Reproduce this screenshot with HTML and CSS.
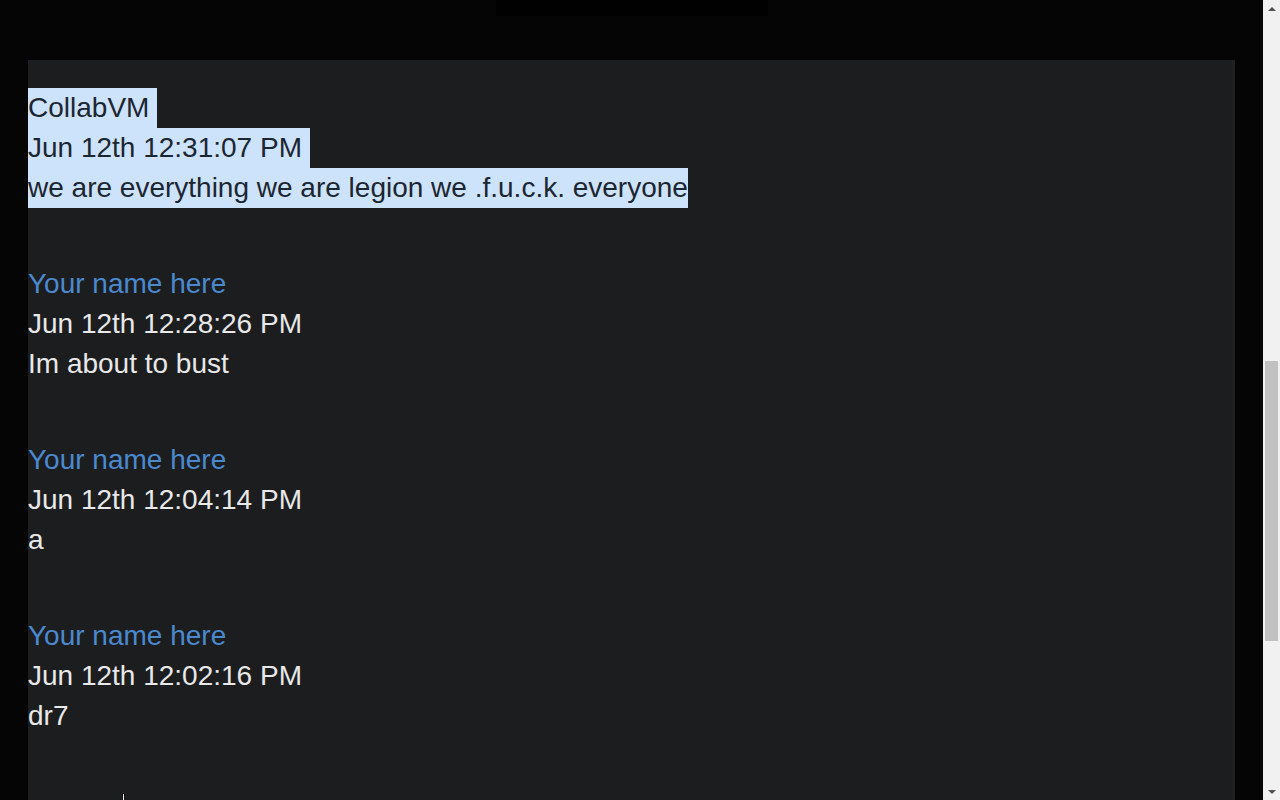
FILE: index.html
```
<!DOCTYPE html>
<html lang="en">

<head>
  <meta charset="UTF-8">
  <meta name="viewport" content="width=device-width, initial-scale=1.0">
  <title>Chat Log</title>
  <link rel="stylesheet" href="styles.css">
</head>

<body>
  <div class="page">
    <!-- Main area -->
    <div class="main">
      <div class="top-bar"></div>

      <div class="log">
        <div class="message">
          <div class="line"><span class="sel sel-nl">CollabVM</span></div>
          <div class="line"><span class="sel sel-nl">Jun 12th 12:31:07 PM</span></div>
          <div class="line"><span class="sel">we are everything we are legion we .f.u.c.k. everyone</span></div>
        </div>

        <div class="message">
          <div class="line name">Your name here</div>
          <div class="line">Jun 12th 12:28:26 PM</div>
          <div class="line">Im about to bust</div>
        </div>

        <div class="message">
          <div class="line name">Your name here</div>
          <div class="line">Jun 12th 12:04:14 PM</div>
          <div class="line">a</div>
        </div>

        <div class="message">
          <div class="line name">Your name here</div>
          <div class="line">Jun 12th 12:02:16 PM</div>
          <div class="line">dr7</div>
        </div>
      </div>

      <div class="cursor"></div>
    </div>

    <!-- Fake scrollbar -->
    <div class="scrollbar">
      <div class="arrow arrow-up"></div>
      <div class="track">
        <div class="thumb"></div>
      </div>
      <div class="arrow arrow-down"></div>
    </div>
  </div>
</body>

</html>
```

FILE: styles.css
```
* {
  margin: 0;
  padding: 0;
  box-sizing: border-box;
  font-family: 'Liberation Sans', Arial, sans-serif;
}

body {
  background-color: #050505;
  height: 100vh;
  overflow: hidden;
}

.page {
  display: flex;
  height: 100vh;
}

.main {
  position: relative;
  flex: 1;
  display: flex;
  flex-direction: column;
  align-items: center;
  overflow: hidden;
}

.top-bar {
  width: 272px;
  height: 16px;
  background-color: #010101;
  flex-shrink: 0;
}

.log {
  align-self: stretch;
  flex: 1;
  margin: 44px 28px 0;
  padding-top: 28px;
  background-color: #1c1d1f;
  border-right: 3px solid #202123;
  font-size: 28px;
  color: #e8e8e8;
}

.message {
  margin-bottom: 56px;
}

.line {
  height: 40px;
  line-height: 40px;
  white-space: nowrap;
}

.name {
  color: #4b89cf;
}

.sel {
  display: inline-block;
  line-height: 40px;
  background-color: #cde3fb;
  color: #1c2632;
}

.sel-nl {
  padding-right: 8px;
}

.cursor {
  position: absolute;
  left: 122px;
  top: 793px;
  width: 3px;
  height: 10px;
  background-color: #fff;
  border: 1px solid #111;
}

.scrollbar {
  width: 17px;
  flex-shrink: 0;
  display: flex;
  flex-direction: column;
  background-color: #f1f1f1;
}

.arrow {
  height: 17px;
  display: flex;
  justify-content: center;
  align-items: center;
}

.arrow::before {
  content: '';
  border-left: 4px solid transparent;
  border-right: 4px solid transparent;
}

.arrow-up::before {
  border-bottom: 4px solid #505050;
}

.arrow-down::before {
  border-top: 4px solid #505050;
}

.track {
  flex: 1;
  padding-top: 344px;
}

.thumb {
  width: 13px;
  height: 280px;
  margin-left: 2px;
  background-color: #c1c1c1;
}
```
